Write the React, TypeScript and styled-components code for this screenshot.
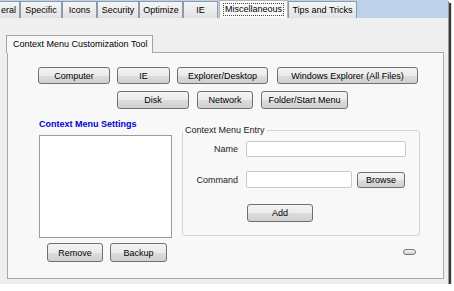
import styled, { createGlobalStyle } from 'styled-components'

const Global = createGlobalStyle`
  body {
    margin: 0;
    background: #fff;
    font-family: "Liberation Sans", Arial, sans-serif;
    font-size: 9px;
    color: #000;
  }
`

const Window = styled.div`
  width: 448px;
  height: 284px;
  background: #efefef;
  box-shadow: 1px 1px 0 #9a9a9a, 3px 3px 1px #3a3a3a;
  display: flex;
  flex-direction: column;
`

const TabStrip = styled.div`
  height: 18px;
  flex-shrink: 0;
  background: #bdd1e9;
  display: flex;
  align-items: flex-end;
`

const Tab = styled.div<{ $w: number; $active?: boolean; $cut?: boolean }>`
  width: ${p => p.$w}px;
  height: ${p => (p.$active ? 18 : 17)}px;
  box-sizing: border-box;
  border: 1px solid ${p => (p.$active ? '#b5b5b5' : '#8c9aab')};
  border-bottom: none;
  border-left-width: ${p => (p.$cut ? 0 : 1)}px;
  margin-left: ${p => (p.$active ? 1 : 0)}px;
  background: ${p => (p.$active ? '#fafafa' : 'linear-gradient(#f5f5f5, #e2e2e2)')};
  display: flex;
  align-items: center;
  justify-content: ${p => (p.$cut ? 'flex-end' : 'center')};
  padding-right: ${p => (p.$cut ? 3 : 0)}px;
  white-space: nowrap;
  overflow: hidden;
`

const FocusText = styled.span`
  outline: 1px dotted #444;
  padding: 0 1px;
  line-height: 11px;
`

const Content = styled.div`
  flex: 1;
  display: flex;
  flex-direction: column;
  padding: 17px 4px 5px 7px;
`

const InnerTab = styled.div`
  position: relative;
  z-index: 1;
  width: 147px;
  height: 18px;
  margin-left: -1px;
  margin-bottom: -1px;
  box-sizing: border-box;
  border: 1px solid #a3a3a3;
  border-bottom: none;
  background: #f8f8f8;
  padding: 3px 0 0 6px;
  white-space: nowrap;
`

const Panel = styled.div`
  flex: 1;
  border: 1px solid #a8a8a8;
  background: #f8f8f8;
  padding-top: 14px;
  display: flex;
  flex-direction: column;
`

const ButtonRow = styled.div<{ $indent: number; $top?: number }>`
  display: flex;
  gap: ${p => (p.$indent > 100 ? 8 : 7)}px;
  margin-left: ${p => p.$indent}px;
  margin-top: ${p => p.$top ?? 0}px;
`

const Button = styled.button<{ $w: number; $h?: number }>`
  width: ${p => p.$w}px;
  height: ${p => p.$h ?? 18}px;
  padding: 0;
  flex-shrink: 0;
  box-sizing: border-box;
  border: 1px solid #707070;
  border-radius: 3px;
  background: linear-gradient(#f3f3f3 0%, #ebebeb 50%, #dddddd 51%, #d0d0d0 100%);
  font: inherit;
  color: #000;
  white-space: nowrap;
`

const Lower = styled.div`
  display: flex;
  align-items: flex-start;
  margin-top: 10px;
  margin-left: 31px;
  gap: 10px;
`

const LeftCol = styled.div`
  width: 133px;
  display: flex;
  flex-direction: column;
`

const Title = styled.div`
  color: #0000d4;
  font-weight: bold;
  line-height: 11px;
  white-space: nowrap;
`

const ListBox = styled.div`
  margin-top: 5px;
  height: 103px;
  box-sizing: border-box;
  border: 1px solid #9c9c9c;
  background: #fff;
`

const RightCol = styled.div`
  width: 238px;
  display: flex;
  flex-direction: column;
`

const Group = styled.fieldset`
  margin: 6px 0 0;
  padding: 0 0 0 0;
  height: 111px;
  box-sizing: border-box;
  border: 1px solid #d4d4d4;
  border-radius: 3px;
`

const Legend = styled.legend`
  padding: 0 2px;
  line-height: 11px;
  color: #222;
`

const FieldRow = styled.div<{ $top: number }>`
  display: flex;
  align-items: center;
  gap: 8px;
  margin-top: ${p => p.$top}px;
`

const Label = styled.span`
  width: 55px;
  text-align: right;
  color: #1e1e1e;
`

const Input = styled.div<{ $w: number; $h: number }>`
  width: ${p => p.$w}px;
  height: ${p => p.$h}px;
  box-sizing: border-box;
  border: 1px solid #c9c9c9;
  border-radius: 2px;
  background: #fff;
`

const Spacer = styled.div<{ $w: number }>`
  width: ${p => p.$w}px;
`

const Mini = styled.div`
  align-self: flex-end;
  margin: 13px 4px 0 0;
  width: 13px;
  height: 6px;
  box-sizing: border-box;
  border: 1px solid #777;
  border-radius: 3px;
  background: linear-gradient(#f3f3f3, #d0d0d0);
`

const tabs: [string, number][] = [
  ['Specific', 42],
  ['Icons', 35],
  ['Security', 42],
  ['Optimize', 44],
  ['IE', 35],
]

export default function App() {
  return (
    <>
      <Global />
      <Window>
        <TabStrip>
          <Tab $w={20} $cut>
            eral
          </Tab>
          {tabs.map(([t, w]) => (
            <Tab key={t} $w={w}>
              {t}
            </Tab>
          ))}
          <Tab $w={69} $active>
            <FocusText>Miscellaneous</FocusText>
          </Tab>
          <Tab $w={69}>Tips and Tricks</Tab>
        </TabStrip>
        <Content>
          <InnerTab>Context Menu Customization Tool</InnerTab>
          <Panel>
            <ButtonRow $indent={30}>
              <Button $w={72} $h={17}>Computer</Button>
              <Button $w={53} $h={17}>IE</Button>
              <Button $w={91} $h={17}>Explorer/Desktop</Button>
              <Button $w={141} $h={17} style={{ marginLeft: 2 }}>
                Windows Explorer (All Files)
              </Button>
            </ButtonRow>
            <ButtonRow $indent={109} $top={7}>
              <Button $w={72}>Disk</Button>
              <Button $w={56}>Network</Button>
              <Button $w={87}>Folder/Start Menu</Button>
            </ButtonRow>
            <Lower>
              <LeftCol>
                <Title>Context Menu Settings</Title>
                <ListBox />
                <ButtonRow $indent={8} $top={5}>
                  <Button $w={56} $h={19}>Remove</Button>
                  <Button $w={57} $h={19}>Backup</Button>
                </ButtonRow>
              </LeftCol>
              <RightCol>
                <Group>
                  <Legend>Context Menu Entry</Legend>
                  <FieldRow $top={5}>
                    <Label>Name</Label>
                    <Input $w={160} $h={16} />
                  </FieldRow>
                  <FieldRow $top={14}>
                    <Label>Command</Label>
                    <Input $w={106} $h={17} />
                    <Button $w={48} $h={16} style={{ marginLeft: -3 }}>
                      Browse
                    </Button>
                  </FieldRow>
                  <FieldRow $top={16}>
                    <Spacer $w={56} />
                    <Button $w={66}>Add</Button>
                  </FieldRow>
                </Group>
                <Mini />
              </RightCol>
            </Lower>
          </Panel>
        </Content>
      </Window>
    </>
  )
}
